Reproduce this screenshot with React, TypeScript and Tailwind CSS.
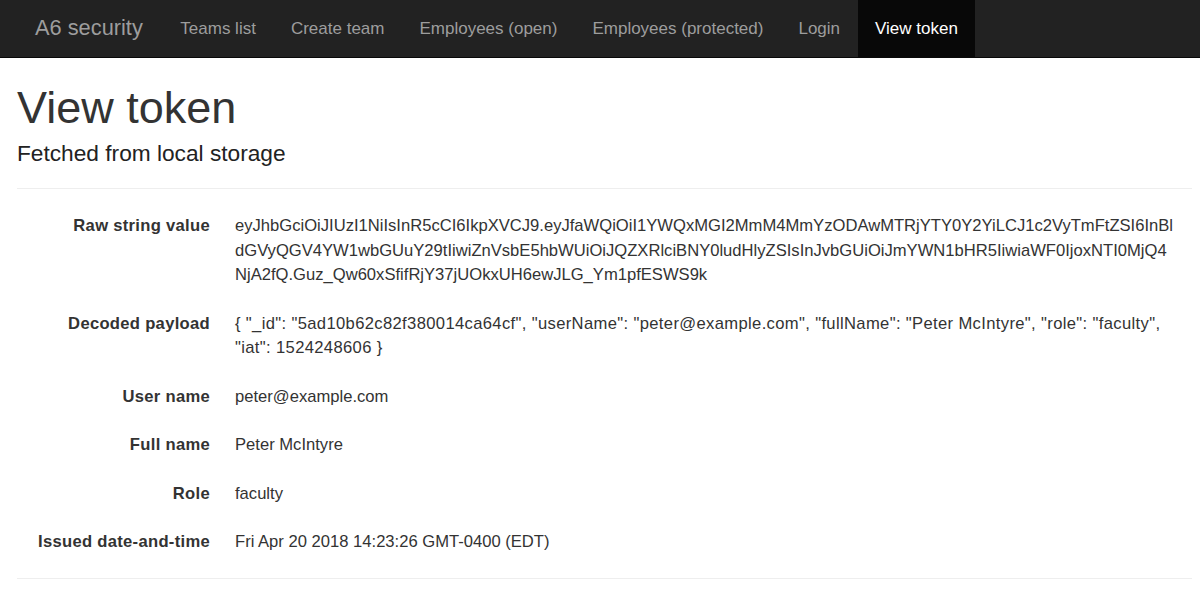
import React from "react";

const font = { fontFamily: '"Liberation Sans", Arial, Helvetica, sans-serif' };

const navItems = [
  "Teams list",
  "Create team",
  "Employees (open)",
  "Employees (protected)",
  "Login",
  "View token",
];

type Row = { label: string; lines: string[]; wide?: boolean };

const rows: Row[] = [
  {
    label: "Raw string value",
    lines: [
      "eyJhbGciOiJIUzI1NiIsInR5cCI6IkpXVCJ9.eyJfaWQiOiI1YWQxMGI2MmM4MmYzODAwMTRjYTY0Y2YiLCJ1c2VyTmFtZSI6InBl",
      "dGVyQGV4YW1wbGUuY29tIiwiZnVsbE5hbWUiOiJQZXRlciBNY0ludHlyZSIsInJvbGUiOiJmYWN1bHR5IiwiaWF0IjoxNTI0MjQ4",
      "NjA2fQ.Guz_Qw60xSfifRjY37jUOkxUH6ewJLG_Ym1pfESWS9k",
    ],
  },
  {
    label: "Decoded payload",
    wide: true,
    lines: [
      '{ "_id": "5ad10b62c82f380014ca64cf", "userName": "peter@example.com", "fullName": "Peter McIntyre", "role": "faculty",',
      '"iat": 1524248606 }',
    ],
  },
  { label: "User name", lines: ["peter@example.com"] },
  { label: "Full name", lines: ["Peter McIntyre"] },
  { label: "Role", lines: ["faculty"] },
  { label: "Issued date-and-time", lines: ["Fri Apr 20 2018 14:23:26 GMT-0400 (EDT)"] },
];

export default function App() {
  return (
    <div className="min-h-[599px] bg-white text-[#333]" style={font}>
      <nav className="h-[58px] bg-[#222] border-b border-[#080808] flex items-stretch">
        <div className="pl-[35px] pr-[20px] flex items-center text-[21.8px] text-[#9d9d9d]">
          A6 security
        </div>
        <ul className="flex items-stretch">
          {navItems.map((item) => {
            const active = item === "View token";
            return (
              <li
                key={item}
                className={
                  active
                    ? "px-[17.5px] flex items-center text-[17px] bg-[#080808] text-white"
                    : "px-[17.5px] flex items-center text-[17px] text-[#9d9d9d]"
                }
              >
                {item}
              </li>
            );
          })}
        </ul>
      </nav>

      <main className="pl-[17px] pr-[8px]">
        <h1 className="mt-[25px] text-[45px] leading-[1.1] font-normal">View token</h1>
        <h4 className="mt-[8px] text-[22.7px] leading-[1.1] font-normal text-[#222]">
          Fetched from local storage
        </h4>
        <div className="mt-[23px] border-t border-[#eee]" />

        <div className="pt-[25px]">
          {rows.map((r) => (
            <div key={r.label} className="flex mb-[24px] text-[16.6px] leading-[24.5px]">
              <div className="w-[193px] shrink-0 text-right font-bold tracking-[0.3px]">
                {r.label}
              </div>
              <div
                className={
                  r.wide
                    ? "ml-[25px] flex flex-col tracking-[0.35px]"
                    : "ml-[25px] flex flex-col"
                }
              >
                {r.lines.map((l, i) => (
                  <span key={i} className="whitespace-nowrap">
                    {l}
                  </span>
                ))}
              </div>
            </div>
          ))}
        </div>
        <div className="-mt-[1px] border-t border-[#eee]" />
      </main>
    </div>
  );
}
